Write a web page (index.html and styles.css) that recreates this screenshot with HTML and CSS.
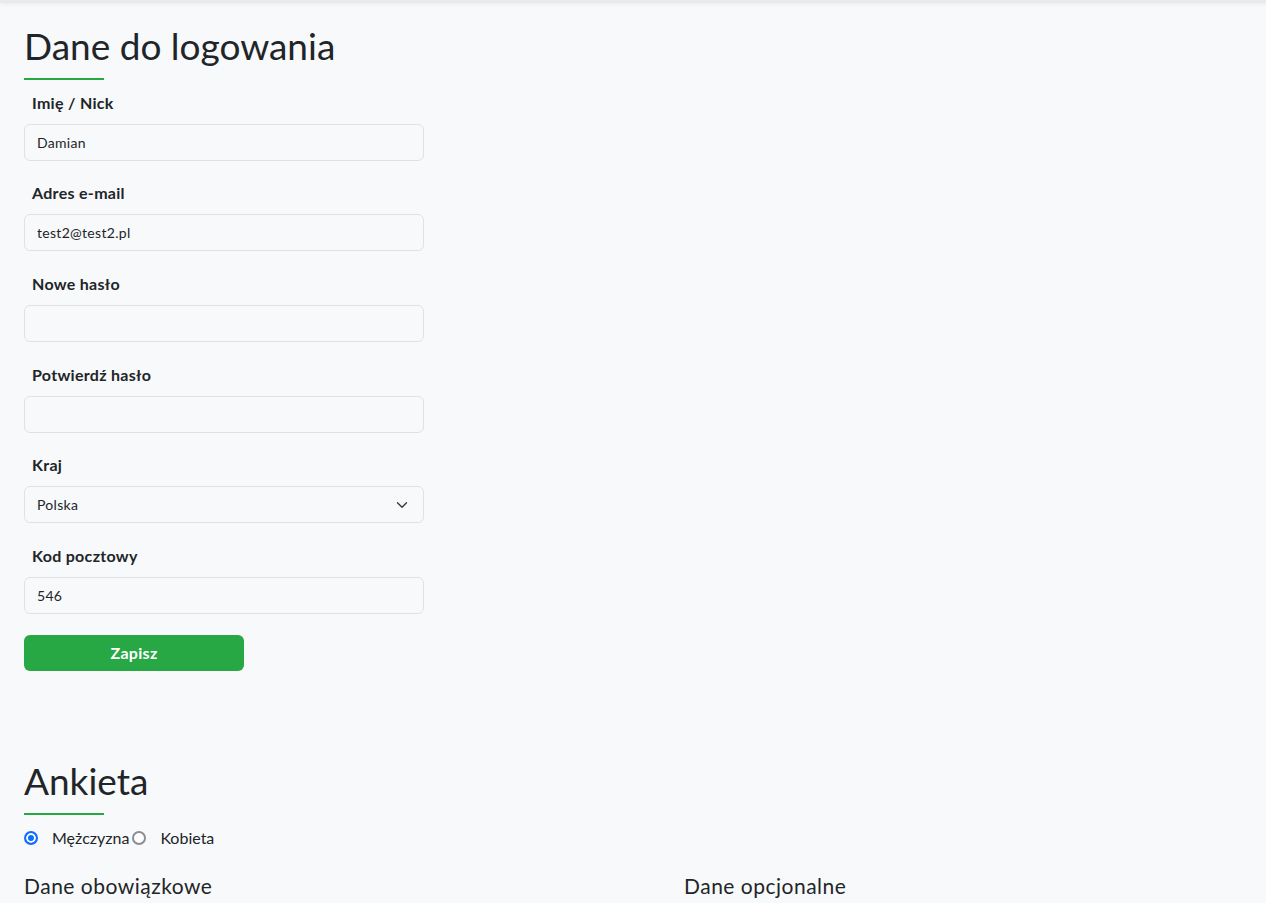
FILE: index.html
```html
<!DOCTYPE html>
<html lang="pl">
<head>
<meta charset="utf-8">
<title>Dane do logowania</title>
<link rel="stylesheet" href="styles.css">
</head>
<body>
<div class="topbar"></div>
<main class="page">
  <section class="login">
    <h1 class="title">Dane do logowania</h1>
    <div class="underline"></div>
    <form class="form">
      <div class="field">
        <label class="label" for="name">Imię / Nick</label>
        <input class="control" id="name" type="text" value="Damian">
      </div>
      <div class="field">
        <label class="label" for="email">Adres e-mail</label>
        <input class="control" id="email" type="text" value="test2@test2.pl">
      </div>
      <div class="field">
        <label class="label" for="pass">Nowe hasło</label>
        <input class="control" id="pass" type="password">
      </div>
      <div class="field">
        <label class="label" for="pass2">Potwierdź hasło</label>
        <input class="control" id="pass2" type="password">
      </div>
      <div class="field">
        <label class="label" for="country">Kraj</label>
        <div class="select-wrap">
          <select class="control select" id="country">
            <option>Polska</option>
          </select>
          <svg class="chevron" width="16" height="16" viewBox="0 0 16 16" aria-hidden="true">
            <path d="M2 5l6 6 6-6" fill="none" stroke="#343a40" stroke-width="1.8" stroke-linecap="round" stroke-linejoin="round"/>
          </svg>
        </div>
      </div>
      <div class="field">
        <label class="label" for="zip">Kod pocztowy</label>
        <input class="control" id="zip" type="text" value="546">
      </div>
      <button class="btn" type="button">Zapisz</button>
    </form>
  </section>

  <section class="survey">
    <h1 class="title">Ankieta</h1>
    <div class="underline"></div>
    <div class="radios">
      <label class="radio"><input type="radio" name="sex" checked><span>Mężczyzna</span></label>
      <label class="radio"><input type="radio" name="sex"><span>Kobieta</span></label>
    </div>
    <div class="columns">
      <h2 class="subtitle">Dane obowiązkowe</h2>
      <h2 class="subtitle">Dane opcjonalne</h2>
    </div>
  </section>
</main>
</body>
</html>
```

FILE: styles.css
```css
* { box-sizing: border-box; }

html, body {
  margin: 0;
  padding: 0;
  background: #f8f9fa;
}

body {
  font-family: Lato, "Noto Sans", sans-serif;
  color: #212529;
  font-size: 16px;
  line-height: 1.5;
  overflow: hidden;
}

.topbar {
  height: 3px;
  background: #e9eaeb;
  box-shadow: 0 1px 4px rgba(0, 0, 0, 0.08);
}

.page {
  padding: 21px 24px 0 24px;
}

.title {
  margin: 0;
  font-size: 37px;
  font-weight: 400;
  line-height: 1.2;
}

.underline {
  width: 80px;
  height: 2px;
  background: #28a745;
  margin-top: 9.6px;
}

.form {
  margin-top: 10.6px;
  width: 400px;
}

.field {
  margin-bottom: 20.67px;
}

.label {
  display: block;
  padding-left: 8px;
  font-weight: 700;
  font-size: 16px;
  letter-spacing: 0.3px;
  line-height: 24px;
  margin-bottom: 9px;
}

.control {
  display: block;
  width: 400px;
  height: 37px;
  padding: 0 12px;
  font-family: inherit;
  font-size: 14px;
  letter-spacing: 0.3px;
  color: #212529;
  background: #f8f9fa;
  border: 1px solid #dee2e6;
  border-radius: 6px;
  outline: none;
}

.select-wrap {
  position: relative;
}

.select {
  appearance: none;
  -webkit-appearance: none;
}

.chevron {
  position: absolute;
  right: 16px;
  top: 13px;
  width: 12px;
  height: 12px;
  pointer-events: none;
}

.btn {
  display: block;
  width: 220px;
  height: 36px;
  border: 0;
  border-radius: 6px;
  background: #28a745;
  color: #fff;
  font-family: inherit;
  font-weight: 700;
  font-size: 16px;
  letter-spacing: 0.3px;
}

.survey {
  margin-top: 88.5px;
}

.radios {
  display: flex;
  align-items: center;
  margin-top: 11px;
  height: 24px;
}

.radio {
  display: flex;
  align-items: center;
  font-size: 16px;
}

.radio input {
  appearance: none;
  -webkit-appearance: none;
  margin: 0 14px 0 0;
  width: 14px;
  height: 14px;
  border-radius: 50%;
  border: 2px solid #8a8e95;
  background: #fff;
}

.radio input:checked {
  border-color: #0d6efd;
  background: #0d6efd;
  box-shadow: inset 0 0 0 2px #fff;
}

.radio + .radio {
  margin-left: 3px;
}

.columns {
  display: grid;
  grid-template-columns: 660px 1fr;
  margin-top: 23px;
}

.subtitle {
  margin: 0;
  font-size: 21px;
  letter-spacing: 0.5px;
  font-weight: 400;
  line-height: 1.2;
}
```
